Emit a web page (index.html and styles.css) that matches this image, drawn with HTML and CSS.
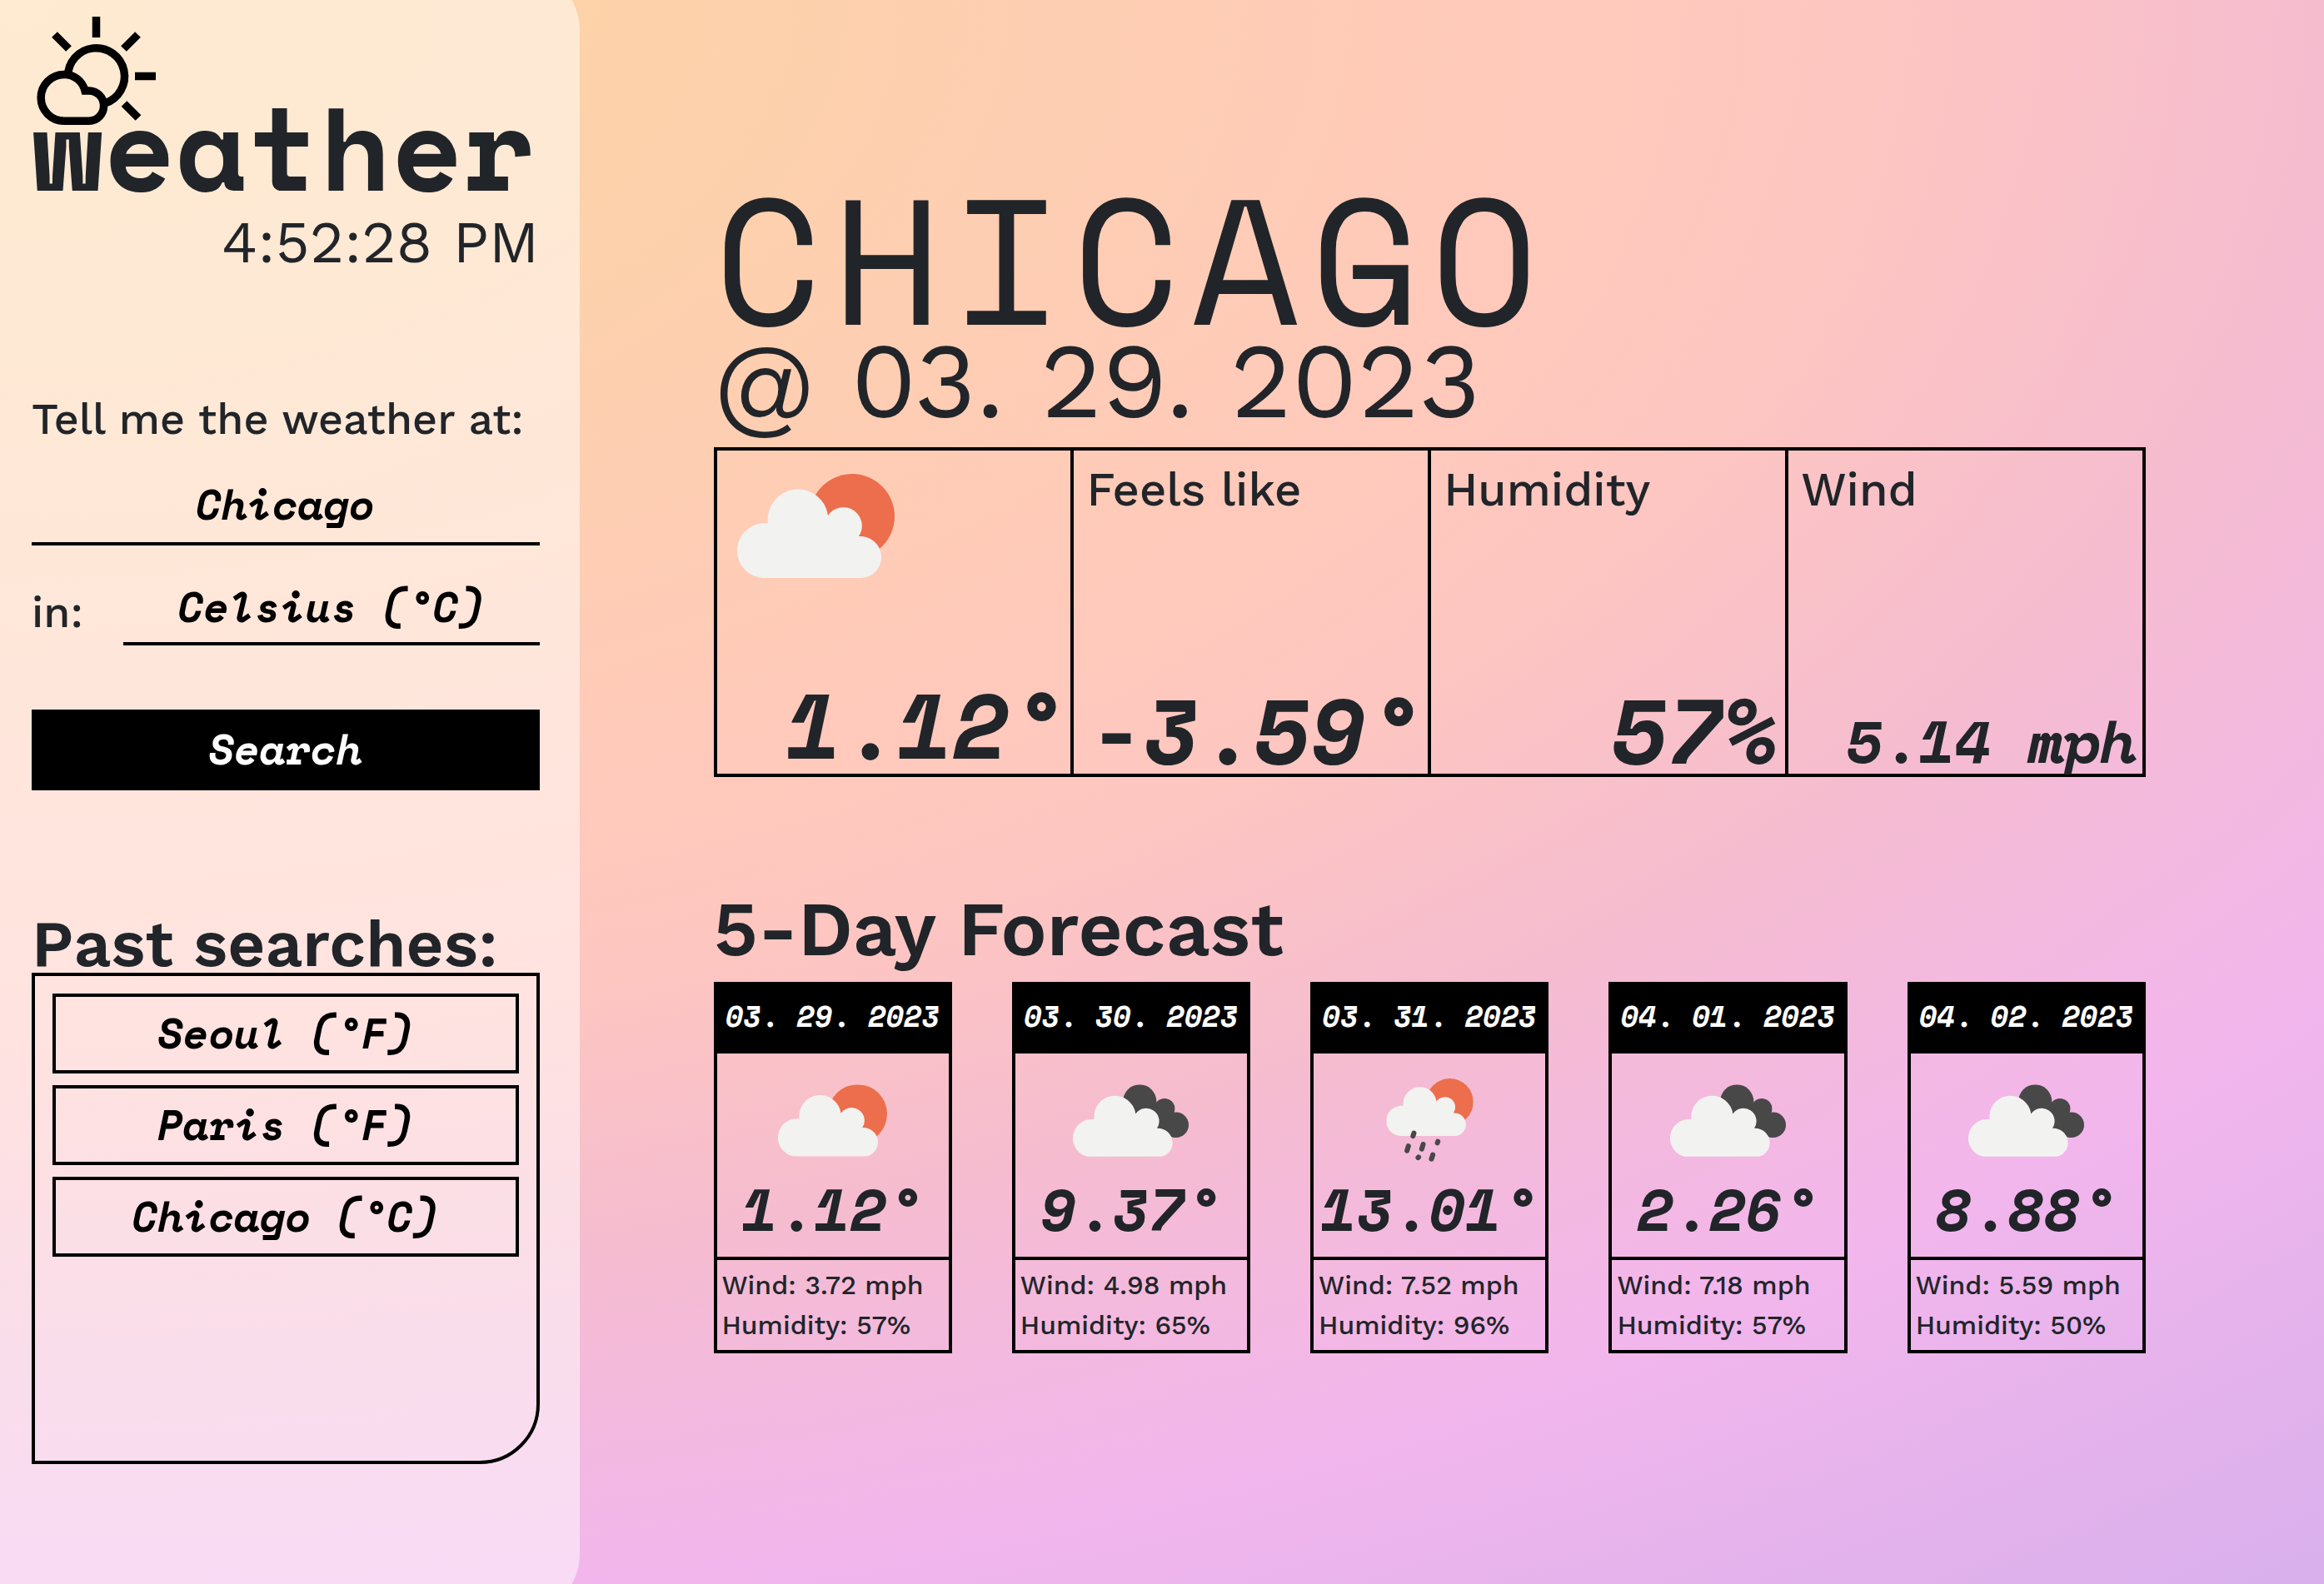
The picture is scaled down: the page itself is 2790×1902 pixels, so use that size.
FILE: index.html
```html
<!DOCTYPE html>
<html lang="en">
<head>
<meta charset="utf-8">
<meta name="viewport" content="width=device-width, initial-scale=1">
<title>Weather</title>
<link rel="stylesheet" href="styles.css">
</head>
<body>
<svg class="sprite" aria-hidden="true">
  <symbol id="cloud" viewBox="0 0 189 125">
    <path fill="#f2f2f0" d="M34 125A32.900 32.900 0 1 1 37 59.500A36 36 0 1 1 109 50A22 22 0 0 1 146 75A25 25 0 0 1 150 125Z"/>
  </symbol>
  <symbol id="few-clouds" viewBox="0 0 189 125">
    <circle cx="138" cy="51" r="51" fill="#ec6e4c"/>
    <use href="#cloud" width="189" height="125"/>
  </symbol>
  <symbol id="broken-clouds" viewBox="0 0 201 125">
    <g fill="#484849">
      <circle cx="116" cy="29" r="29"/>
      <circle cx="159" cy="42" r="18"/>
      <circle cx="179" cy="70" r="22"/>
      <path d="M116 29L159 43L179 70L176 92L100 70Z"/>
    </g>
    <use href="#cloud" y="1" width="189" height="125"/>
  </symbol>
  <symbol id="rain" viewBox="0 0 189 181">
    <use href="#few-clouds" width="189" height="125"/>
    <path fill="none" stroke="#484849" stroke-width="11" stroke-linecap="round" d="M58 125L60 119M45 157L48 147M77 153L80 143M111 140L112 137M69 172L70 171M98 175L101 166"/>
  </symbol>
</svg>
<div class="page">
  <aside class="sidebar">
    <header class="brand">
      <svg class="logo" viewBox="38 16 152 134" fill="none" stroke="#000" aria-hidden="true">
        <path stroke-width="9.500" d="M81.500 92A34 34 0 1 1 126 124M115.500 20V45M65.500 41.500L82.500 58.500M165.500 41.500L148.500 58.500M162 91.500H187M149 124.500L166 141.500"/>
        <path stroke-width="9.500" d="M77 145.200A27.800 27.800 0 0 1 77 89.500C89 89.500 99 97 102 109H107A17.500 18 0 0 1 107 145.200Z"/>
      </svg>
      <h1 class="brand-name">weather</h1>
      <time class="clock">4:52:28 PM</time>
    </header>
    <form class="search">
      <label class="label" for="city">Tell me the weather at:</label>
      <input class="field" id="city" type="text" value="Chicago">
      <div class="unit-row">
        <label class="label" for="unit">in:</label>
        <select class="field" id="unit">
          <option>Celsius (°C)</option>
          <option>Fahrenheit (°F)</option>
        </select>
      </div>
      <button class="search-button" type="submit">Search</button>
    </form>
    <section class="history">
      <h2 class="history-title">Past searches:</h2>
      <div class="history-list">
        <button class="history-item" type="button">Seoul (°F)</button>
        <button class="history-item" type="button">Paris (°F)</button>
        <button class="history-item" type="button">Chicago (°C)</button>
      </div>
    </section>
  </aside>
  <main class="main">
    <h2 class="city">CHICAGO</h2>
    <p class="today">@ 03. 29. 2023</p>
    <section class="stats">
      <div class="stat stat-now">
        <svg class="icon-now" viewBox="0 0 189 125" role="img" aria-label="Few clouds"><use href="#few-clouds"/></svg>
        <p class="value">1.12°</p>
      </div>
      <div class="stat"><h3 class="stat-label">Feels like</h3><p class="value">-3.59°</p></div>
      <div class="stat"><h3 class="stat-label">Humidity</h3><p class="value">57%</p></div>
      <div class="stat"><h3 class="stat-label">Wind</h3><p class="value value-small">5.14 mph</p></div>
    </section>
    <h2 class="forecast-title">5-Day Forecast</h2>
    <section class="forecast">
      <article class="card">
        <h3 class="card-date">03. 29. 2023</h3>
        <div class="card-icon"><svg width="131" height="87" viewBox="0 0 189 125" role="img" aria-label="Few clouds"><use href="#few-clouds"/></svg></div>
        <p class="card-temp">1.12°</p>
        <div class="card-foot"><p>Wind: 3.72 mph</p><p>Humidity: 57%</p></div>
      </article>
      <article class="card">
        <h3 class="card-date">03. 30. 2023</h3>
        <div class="card-icon"><svg width="139" height="87" viewBox="0 0 201 125" role="img" aria-label="Broken clouds"><use href="#broken-clouds"/></svg></div>
        <p class="card-temp">9.37°</p>
        <div class="card-foot"><p>Wind: 4.98 mph</p><p>Humidity: 65%</p></div>
      </article>
      <article class="card">
        <h3 class="card-date">03. 31. 2023</h3>
        <div class="card-icon"><svg width="105" height="100" viewBox="0 0 189 181" role="img" aria-label="Rain"><use href="#rain"/></svg></div>
        <p class="card-temp">13.01°</p>
        <div class="card-foot"><p>Wind: 7.52 mph</p><p>Humidity: 96%</p></div>
      </article>
      <article class="card">
        <h3 class="card-date">04. 01. 2023</h3>
        <div class="card-icon"><svg width="139" height="87" viewBox="0 0 201 125" role="img" aria-label="Broken clouds"><use href="#broken-clouds"/></svg></div>
        <p class="card-temp">2.26°</p>
        <div class="card-foot"><p>Wind: 7.18 mph</p><p>Humidity: 57%</p></div>
      </article>
      <article class="card">
        <h3 class="card-date">04. 02. 2023</h3>
        <div class="card-icon"><svg width="139" height="87" viewBox="0 0 201 125" role="img" aria-label="Broken clouds"><use href="#broken-clouds"/></svg></div>
        <p class="card-temp">8.88°</p>
        <div class="card-foot"><p>Wind: 5.59 mph</p><p>Humidity: 50%</p></div>
      </article>
    </section>
  </main>
</div>
</body>
</html>
```
FILE: styles.css
```css
:root {
  --ink: #212529;
  --mono: "Space Mono", "Liberation Mono", monospace;
  --sans: "Work Sans", Inter, sans-serif;
  --line: 4px solid #000;
}

* { box-sizing: border-box; }

body, h1, h2, h3, p { margin: 0; }

body {
  color: var(--ink);
  font-family: var(--sans);
}

.sprite {
  position: absolute;
  width: 0;
  height: 0;
}

.page {
  display: grid;
  grid-template-columns: 25% minmax(0, 1fr);
  min-height: 100vh;
  overflow: hidden;
  background: radial-gradient(165% 134% at 0 0, #fdd6a2 0%, #fdd2aa 17%, #ffc9bc 42%, #fdc6c1 49%, #f5bcd0 61%, #f2b6ec 76%, #d6afec 98%);
}

/* Sidebar */

.sidebar {
  position: relative;
  padding: 16px 50px 0 38px;
}

.sidebar::before {
  content: "";
  position: absolute;
  inset: -36px 2px -36px 0;
  border-radius: 0 72px 72px 0;
  background: rgba(255, 255, 255, 0.5);
}

.brand, .search, .history { position: relative; }

.brand {
  display: flex;
  flex-direction: column;
}

.logo {
  width: 152px;
  height: 134px;
}

.brand-name {
  font: 700 141px/52px var(--mono);
}

.clock {
  margin-top: 49px;
  align-self: flex-end;
  font-size: 71px;
  line-height: 80px;
}

.search {
  display: flex;
  flex-direction: column;
  margin-top: 143px;
}

.label {
  font-size: 52px;
  font-weight: 500;
  line-height: 60px;
  white-space: nowrap;
}

.field {
  width: 100%;
  height: 84px;
  margin-top: 37px;
  padding: 0 0 12px;
  border: 0;
  border-bottom: var(--line);
  border-radius: 0;
  background: transparent;
  color: #000;
  font: italic 700 50px var(--mono);
  text-align: center;
  text-align-last: center;
  appearance: none;
}

.unit-row {
  display: grid;
  grid-template-columns: 110px minmax(0, 1fr);
  align-items: end;
}

.unit-row .label { padding-bottom: 9px; }
.unit-row .field { margin-top: 36px; }

.search-button {
  height: 97px;
  margin-top: 77px;
  padding: 0 0 3px;
  border: 0;
  background: #000;
  color: #fff;
  font: italic 700 50px var(--mono);
}

.history { margin-top: 149px; }

.history-title {
  font-size: 78px;
  font-weight: 600;
  line-height: 70px;
  white-space: nowrap;
}

.history-list {
  display: flex;
  flex-direction: column;
  gap: 14px;
  min-height: 590px;
  padding: 21px;
  border: var(--line);
  border-bottom-right-radius: 72px;
}

.history-item {
  height: 96px;
  padding: 0 0 3px;
  border: var(--line);
  background: transparent;
  color: #000;
  font: italic 700 50px var(--mono);
}

/* Current conditions */

.main { padding: 216px 214px 0 159px; }

.city {
  font: 400 213px/186px var(--mono);
  letter-spacing: 13px;
}

.today {
  font-size: 127px;
  line-height: 112px;
}

.stats {
  display: grid;
  grid-template-columns: repeat(4, minmax(0, 1fr));
  height: 396px;
  margin-top: 23px;
  border: solid #000;
  border-width: 4px 2px;
}

.stat {
  display: flex;
  flex-direction: column;
  justify-content: space-between;
  padding: 15px 7px 15px 15px;
  border: solid #000;
  border-width: 0 2px;
}

.stat-now { padding: 28px 7px 21px 24px; }

.icon-now {
  width: 189px;
  height: 125px;
}

.stat-label {
  font-size: 56px;
  font-weight: 500;
  line-height: 64px;
}

.value {
  align-self: flex-end;
  font: italic 700 109px/76px var(--mono);
  white-space: nowrap;
}

.value-small {
  font-size: 71px;
  line-height: 50px;
}

/* Forecast */

.forecast-title {
  margin-top: 134px;
  font-size: 92px;
  font-weight: 600;
  line-height: 96px;
}

.forecast {
  display: grid;
  grid-template-columns: repeat(5, minmax(0, 1fr));
  gap: 72px;
  margin-top: 16px;
}

.card { border: var(--line); }

.card-date {
  padding-bottom: 8px;
  background: #000;
  color: #fff;
  font: italic 700 35px/74px var(--mono);
  text-align: center;
  white-space: nowrap;
}

.card-icon {
  display: grid;
  place-items: center;
  height: 160px;
}

.card-temp {
  padding-bottom: 32px;
  font: italic 700 71px/52px var(--mono);
  text-align: center;
}

.card-foot {
  padding: 6px;
  border-top: var(--line);
  font-size: 32px;
  font-weight: 500;
  line-height: 48px;
  white-space: nowrap;
}
```
